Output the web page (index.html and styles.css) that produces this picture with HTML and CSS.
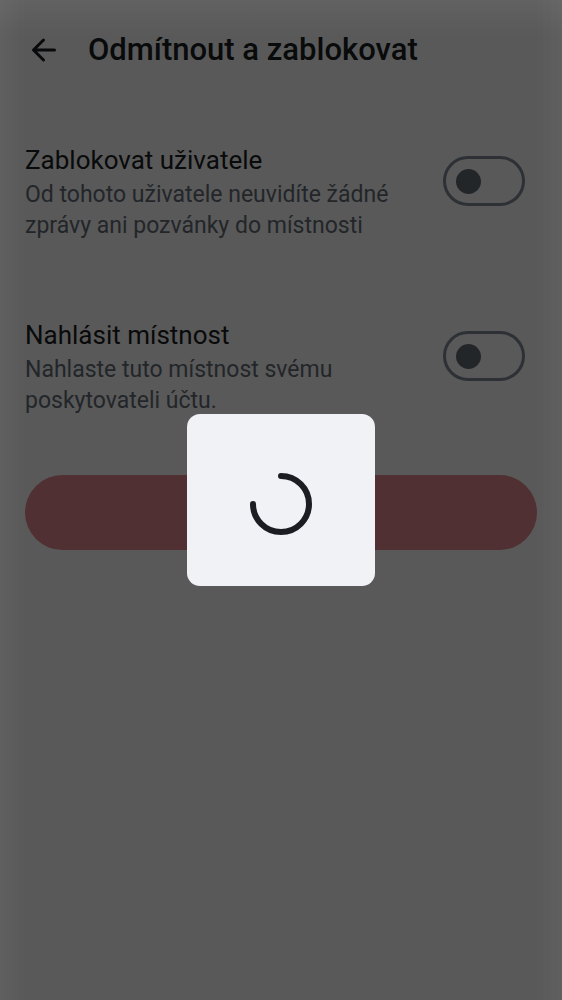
FILE: index.html
```html
<!DOCTYPE html>
<html lang="cs">
<head>
<meta charset="utf-8">
<meta name="viewport" content="width=device-width, initial-scale=1">
<title>Odmítnout a zablokovat</title>
<link rel="stylesheet" href="styles.css">
</head>
<body>
<div class="screen">
  <header class="top-bar">
    <button class="back" type="button" aria-label="Zpět">
      <svg class="back-icon" viewBox="0 0 38 38" aria-hidden="true">
        <path d="M18.5 9 8.5 19 18.5 29M8.5 19H29.5"/>
      </svg>
    </button>
    <h1 class="title">Odmítnout a zablokovat</h1>
  </header>
  <main class="content">
    <div class="setting">
      <div class="setting-text">
        <label class="setting-title" for="block-user">Zablokovat uživatele</label>
        <p class="setting-note" id="block-note">Od tohoto uživatele neuvidíte žádné zprávy ani pozvánky do místnosti</p>
      </div>
      <input class="switch" id="block-user" type="checkbox" role="switch" aria-describedby="block-note">
    </div>
    <div class="setting">
      <div class="setting-text">
        <label class="setting-title" for="report-room">Nahlásit místnost</label>
        <p class="setting-note" id="report-note">Nahlaste tuto místnost svému poskytovateli účtu.</p>
      </div>
      <input class="switch" id="report-room" type="checkbox" role="switch" aria-describedby="report-note">
    </div>
    <button class="decline" type="button" aria-label="Odmítnout"></button>
  </main>
</div>
<div class="scrim">
  <div class="progress-dialog" role="dialog" aria-modal="true" aria-label="Načítání">
    <svg class="spinner" viewBox="0 0 62 62" aria-hidden="true">
      <path d="M31 3A28 28 0 1 1 3 31"/>
    </svg>
  </div>
</div>
</body>
</html>
```

FILE: styles.css
```css
* {
  box-sizing: border-box;
}

body {
  margin: 0;
  background: #fff;
  color: #1b1d22;
  font-family: Roboto, "Noto Sans", sans-serif;
}

.screen {
  min-height: 100vh;
}

.top-bar {
  display: flex;
  align-items: center;
  gap: 25px;
  height: 100px;
  padding: 0 25px;
}

.back {
  display: flex;
  padding: 0;
  border: 0;
  background: none;
  color: inherit;
}

.back-icon {
  width: 38px;
  height: 38px;
  fill: none;
  stroke: currentColor;
  stroke-width: 3;
  stroke-linecap: round;
  stroke-linejoin: round;
}

.title {
  margin: 0;
  font-size: 31px;
  line-height: 38px;
  font-weight: 500;
}

.content {
  padding: 4px 25px 0;
}

.setting {
  display: flex;
  align-items: flex-start;
  gap: 48px;
  padding: 38px 12px 38px 0;
}

.setting-text {
  flex: 1;
}

.setting-title {
  display: block;
  font-size: 26px;
  line-height: 37px;
}

.setting-note {
  margin: 0;
  color: #656d77;
  font-size: 23px;
  line-height: 31px;
}

.switch {
  appearance: none;
  display: flex;
  align-items: center;
  flex: none;
  width: 82px;
  height: 50px;
  margin: 14px 0 0;
  padding: 0 10px;
  border: 3px solid #818a95;
  border-radius: 25px;
}

.switch::before {
  content: "";
  width: 25px;
  height: 25px;
  border-radius: 50%;
  background: #656d77;
}

.switch:checked {
  justify-content: flex-end;
}

.decline {
  display: block;
  width: 100%;
  height: 75px;
  margin-top: 21px;
  border: 0;
  border-radius: 38px;
  background: #e58992;
}

.scrim {
  position: fixed;
  inset: 0;
  display: flex;
  align-items: center;
  justify-content: center;
  background:
    linear-gradient(to bottom, rgb(255 255 255 / 5%), transparent 36px),
    linear-gradient(to right, rgb(255 255 255 / 4%), transparent 26px),
    linear-gradient(to left, rgb(255 255 255 / 4%), transparent 26px),
    rgb(0 0 0 / 65%);
}

.progress-dialog {
  padding: 59px 63px 51px;
  border-radius: 13px;
  background: #f0f2f6;
}

.spinner {
  display: block;
  width: 62px;
  height: 62px;
  fill: none;
  stroke: #1b1d22;
  stroke-width: 6;
  stroke-linecap: round;
}
```
